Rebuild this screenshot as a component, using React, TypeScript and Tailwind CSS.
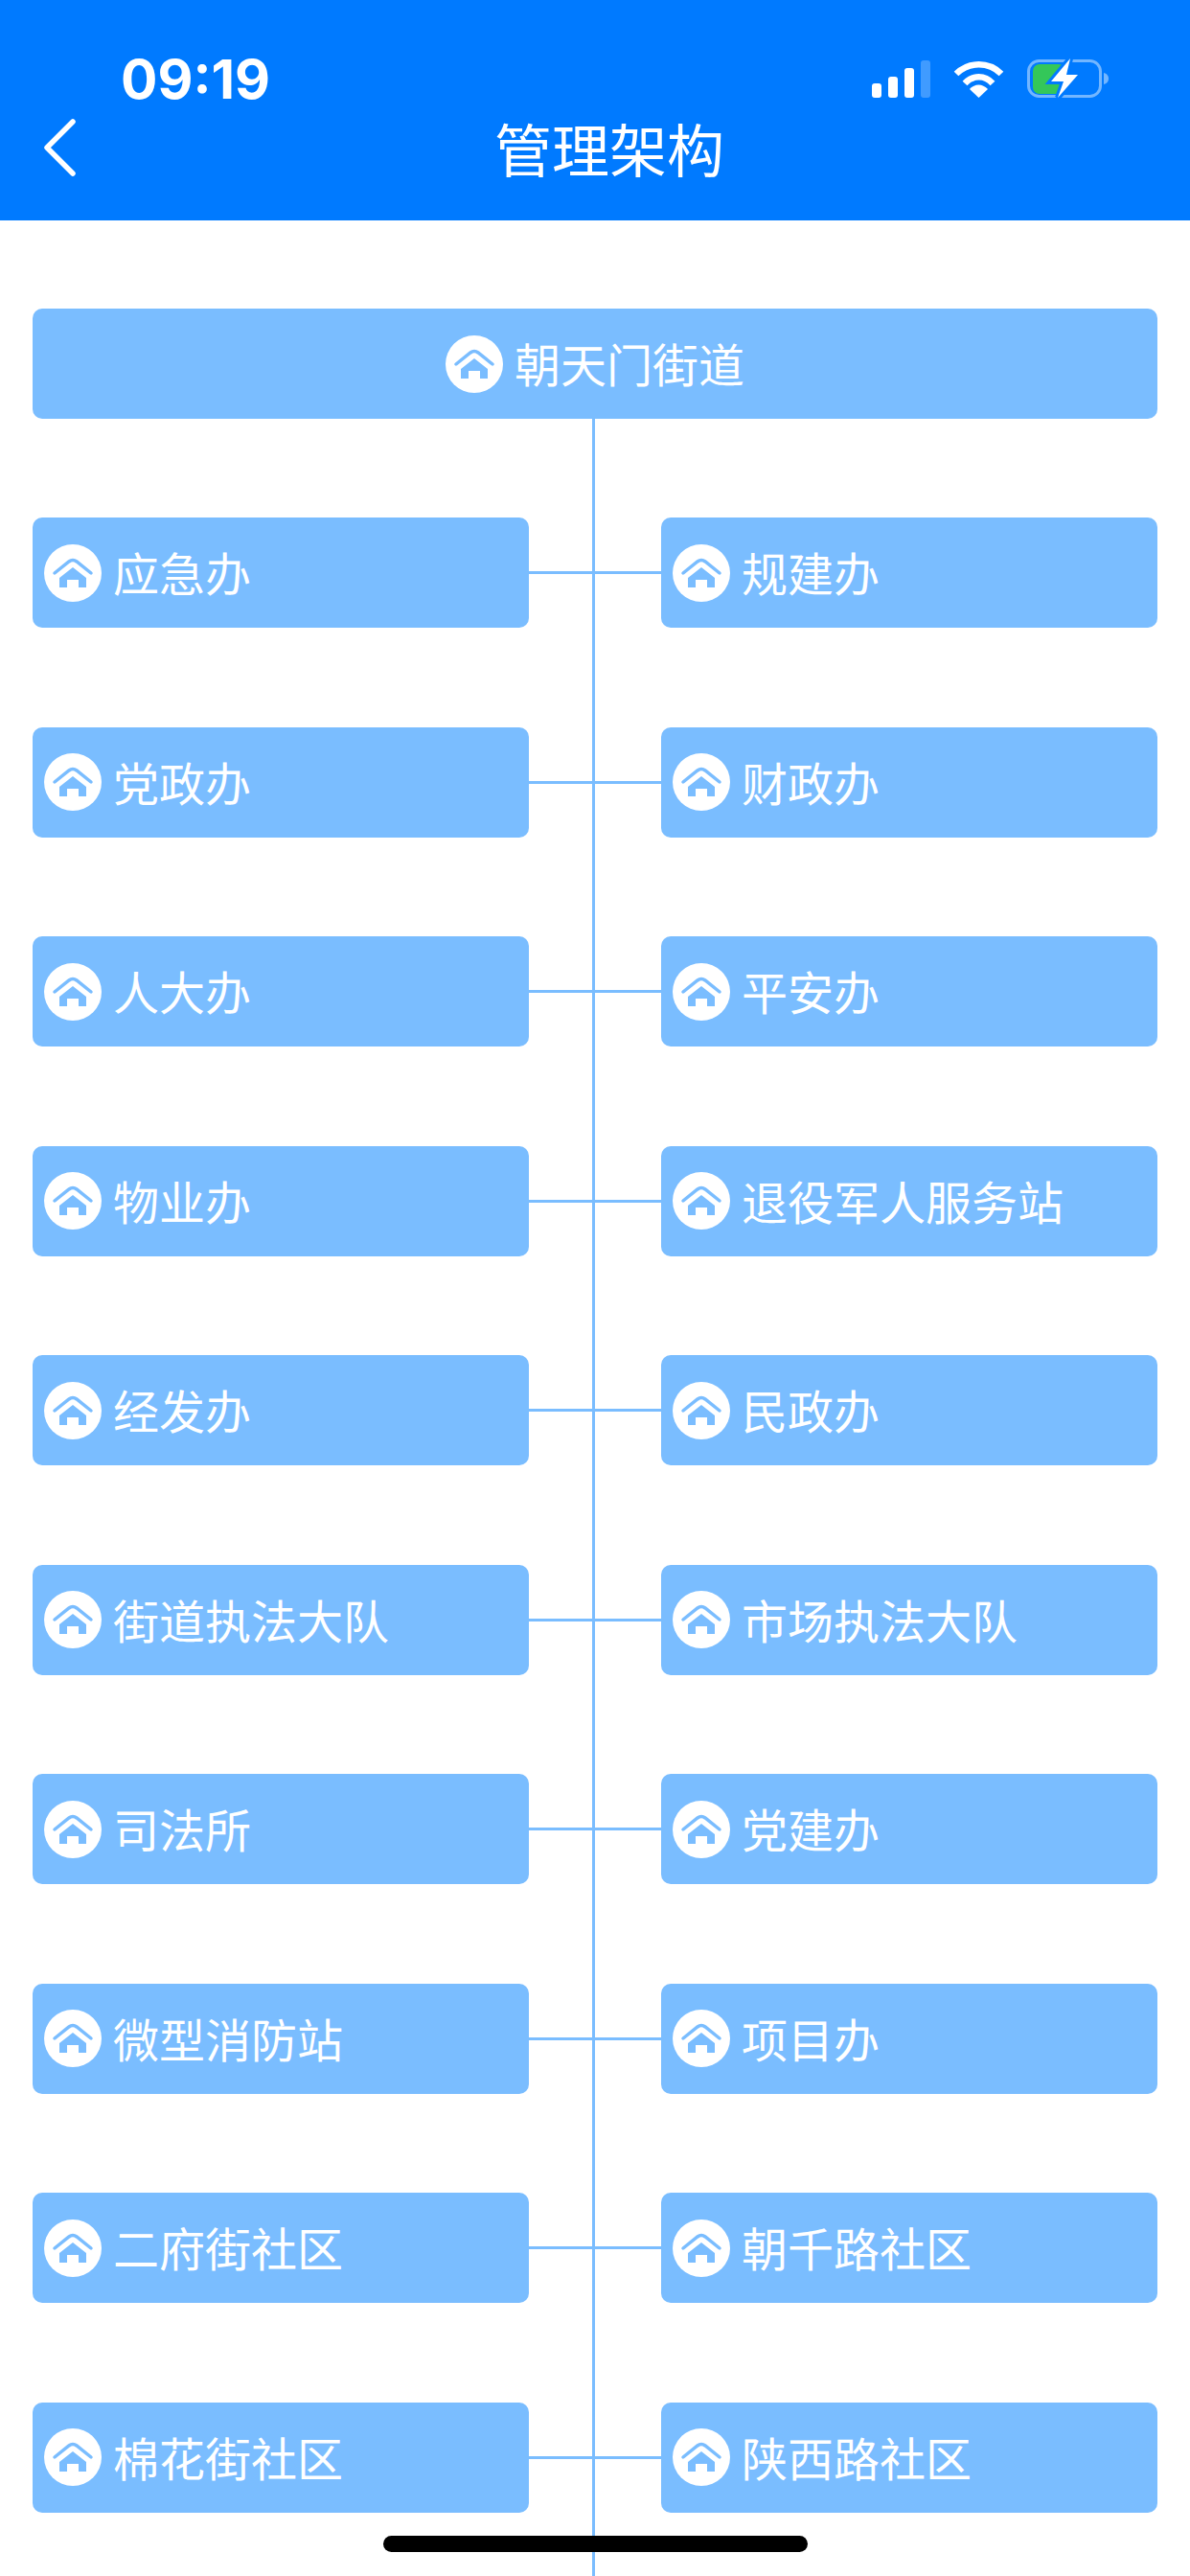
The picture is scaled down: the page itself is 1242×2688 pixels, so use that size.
const rows = [
  ["应急办", "规建办"],
  ["党政办", "财政办"],
  ["人大办", "平安办"],
  ["物业办", "退役军人服务站"],
  ["经发办", "民政办"],
  ["街道执法大队", "市场执法大队"],
  ["司法所", "党建办"],
  ["微型消防站", "项目办"],
  ["二府街社区", "朝千路社区"],
  ["棉花街社区", "陕西路社区"],
];

const fontStack = "font-['Noto_Sans_CJK_SC','Noto_Sans_CJK_JP',sans-serif]";

const HomeBadge = () => (
  <svg width="60" height="60" viewBox="0 0 60 60" className="shrink-0">
    <circle cx="30" cy="30" r="30" fill="#fff" />
    <path
      d="M11 30 L26 18 Q30 15 34 18 L49 30"
      fill="none"
      stroke="#7abdff"
      strokeWidth="3.5"
      strokeLinecap="round"
    />
    <path
      d="M30 24 L44 35 V45 H36 V37 H24 V45 H16 V35 Z"
      fill="#7abdff"
    />
  </svg>
);

const Card = ({ label, center }: { label: string; center?: boolean }) => (
  <div
    className={`flex h-[115px] items-center rounded-[10px] bg-[#7abdff] ${
      center ? "justify-center" : "pl-3"
    }`}
  >
    <HomeBadge />
    <span className={`ml-[12px] pb-[3px] text-[48px] leading-none text-white ${fontStack}`}>
      {label}
    </span>
  </div>
);

const SignalIcon = () => (
  <svg width="61" height="39" viewBox="0 0 61 39">
    <rect x="0" y="24" width="10" height="15" rx="3" fill="#fff" />
    <rect x="17" y="17" width="10" height="22" rx="3" fill="#fff" />
    <rect x="34" y="8" width="10" height="31" rx="3" fill="#fff" />
    <rect x="51" y="0" width="10" height="39" rx="3" fill="#fff" fillOpacity="0.25" />
  </svg>
);

const WifiIcon = () => (
  <svg width="53" height="39" viewBox="0 0 53 39">
    <path d="M3 14 C16 1 37 1 50 14" fill="none" stroke="#fff" strokeWidth="6.5" />
    <path d="M12 24 C20 15 33 15 41 24" fill="none" stroke="#fff" strokeWidth="6.5" />
    <path d="M17 30 C23 24 30 24 36 30 L26.5 39 Z" fill="#fff" />
  </svg>
);

const BatteryIcon = () => (
  <svg width="86" height="42" viewBox="0 0 86 42">
    <rect
      x="1.5"
      y="2.5"
      width="75"
      height="37"
      rx="11"
      fill="none"
      stroke="#fff"
      strokeOpacity="0.45"
      strokeWidth="3"
    />
    <path d="M80 15 C84 16 85 19 85 21 C85 23 84 26 80 27 Z" fill="#fff" fillOpacity="0.45" />
    <rect x="6" y="6" width="34" height="31" rx="7" fill="#34c759" />
    <path d="M45 0 L25 24 H38 L32 41 L53 17 H41 Z" fill="#007aff" stroke="#007aff" strokeWidth="6" />
    <path d="M45 0 L25 24 H38 L32 41 L53 17 H41 Z" fill="#fff" />
  </svg>
);

export default function App() {
  return (
    <div className="relative h-[2688px] w-[1242px] overflow-hidden bg-white">
      <header className="flex h-[230px] flex-col bg-[#007aff]">
        <div className="mt-[56px] flex h-[52px] items-center justify-between pl-[126px] pr-[84px]">
          <span className="font-['Inter',sans-serif] text-[57px] font-bold leading-none text-white">
            09:19
          </span>
          <div className="flex items-center gap-[24px]">
            <SignalIcon />
            <WifiIcon />
            <BatteryIcon />
          </div>
        </div>
        <div className="mt-[15px] flex h-[62px] items-center pl-[45px]">
          <svg width="36" height="60" viewBox="0 0 36 60" fill="none">
            <path
              d="M31 3 L4 30 L31 57"
              stroke="#fff"
              strokeWidth="5.5"
              strokeLinecap="round"
              strokeLinejoin="round"
            />
          </svg>
          <h1
            className={`ml-[435px] text-[60px] font-normal leading-none text-white ${fontStack}`}
          >
            管理架构
          </h1>
        </div>
      </header>

      <main className="relative px-[34px] pt-[92px]">
        {/* 中间竖线 */}
        <div className="absolute left-[618px] top-[200px] h-[2258px] w-[3px] bg-[#7abdff]" />

        <Card label="朝天门街道" center />

        <div className="mt-[103px] flex flex-col gap-[103.55px]">
          {rows.map(([left, right]) => (
            <div key={left} className="relative grid grid-cols-[518px_138px_518px] items-center">
              <Card label={left} />
              <div className="h-[3px] bg-[#7abdff]" />
              <Card label={right} />
            </div>
          ))}
        </div>
      </main>

      <div className="absolute left-[400px] top-[2646px] h-[17px] w-[443px] rounded-full bg-black" />
    </div>
  );
}
